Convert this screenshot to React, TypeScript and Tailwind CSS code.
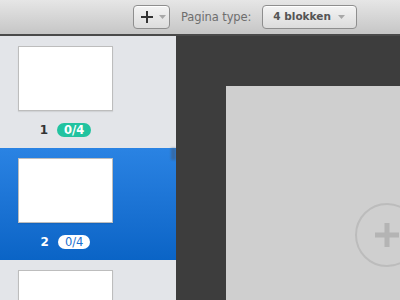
import React from 'react';

// the third page is scrolled mostly out of view, so only its thumbnail shows
const pages = [
  { n: 1, done: 0, total: 4, label: true },
  { n: 2, done: 0, total: 4, label: true },
  { n: 3, done: 0, total: 4, label: false },
];

const Caret = () => (
  <svg width="7" height="4" viewBox="0 0 7 4" className="block">
    <path d="M0 0h7L3.5 4z" fill="#a8a8a8" />
  </svg>
);

const App: React.FC = () => {
  const selected = 2;

  return (
    <div
      className="w-[400px] h-[300px] overflow-hidden flex flex-col bg-[#3d3d3d]"
      style={{ fontFamily: '"DejaVu Sans", "Liberation Sans", sans-serif' }}
    >
      {/* toolbar */}
      <div className="h-[36px] shrink-0 flex items-start pt-[5px] bg-gradient-to-b from-[#e6e6e6] to-[#c6c6c6] border-b-2 border-[#4a4a4a]">
        <button className="ml-[133px] w-[37px] h-[24px] rounded-[4px] border border-[#8e8e8e] bg-gradient-to-b from-[#f4f4f4] to-[#dcdcdc] flex items-center pl-[6px] gap-[5px] shadow-[inset_0_1px_0_#fff]">
          <svg width="14" height="14" viewBox="0 0 14 14" className="block">
            <path d="M7 1v12M1 7h12" stroke="#333" strokeWidth="2" />
          </svg>
          <Caret />
        </button>
        <span className="ml-[11px] mt-[4px] text-[11.5px] text-[#6e6e6e] tracking-[-0.1px]">Pagina type:</span>
        <button className="ml-[11px] w-[95px] h-[24px] rounded-[4px] border border-[#8e8e8e] bg-gradient-to-b from-[#f4f4f4] to-[#dcdcdc] flex items-center justify-between pl-[10px] pr-[11px] shadow-[inset_0_1px_0_#fff]">
          <span className="text-[10.5px] font-bold text-[#555]">4 blokken</span>
          <Caret />
        </button>
      </div>

      <div className="flex-1 flex min-h-0">
        {/* sidebar */}
        <div className="w-[176px] shrink-0 bg-[#e3e5e9] flex flex-col relative overflow-hidden">
          {pages.map((p) => {
            const active = p.n === selected;
            return (
              <div
                key={p.n}
                className={`h-[112px] shrink-0 flex flex-col items-center pt-[10px] pr-[45px] ${
                  active ? 'bg-gradient-to-b from-[#2a83e3] to-[#0a64c6]' : ''
                }`}
              >
                <div className="w-[95px] h-[65px] shrink-0 bg-white border border-[#bdbdbd] shadow-[0_1px_1px_rgba(0,0,0,0.08)]" />
                {p.label && (
                  <div className="mt-[10px] flex items-center gap-[9px]">
                    <span className={`text-[12px] font-bold ${active ? 'text-white' : 'text-[#333]'}`}>{p.n}</span>
                    <span
                      className={`h-[14px] px-[7px] rounded-full text-[11.5px] leading-[14px] ${
                        active ? 'bg-white text-[#1a6fcf]' : 'bg-[#22c3a0] text-white font-bold'
                      }`}
                    >
                      {p.done}/{p.total}
                    </span>
                  </div>
                )}
              </div>
            );
          })}
          {/* scroll shadow on the selected row */}
          <div className="absolute right-0 top-[112px] w-[5px] h-[12px] bg-[#3d5d85]/60 blur-[1px]" />
        </div>

        {/* canvas */}
        <div className="flex-1 bg-[#3d3d3d] pl-[50px] pt-[50px] overflow-hidden">
          <div className="w-[400px] h-[300px] bg-[#cfcfcf] relative">
            <div className="absolute left-[129px] top-[117px] w-[64px] h-[64px] rounded-full border-2 border-[#bcbcbc] flex items-center justify-center">
              <svg width="28" height="28" viewBox="0 0 28 28" className="block">
                <path d="M14 2v24M2 14h24" stroke="#b4b4b4" strokeWidth="5" />
              </svg>
            </div>
          </div>
        </div>
      </div>
    </div>
  );
};

export default App;
